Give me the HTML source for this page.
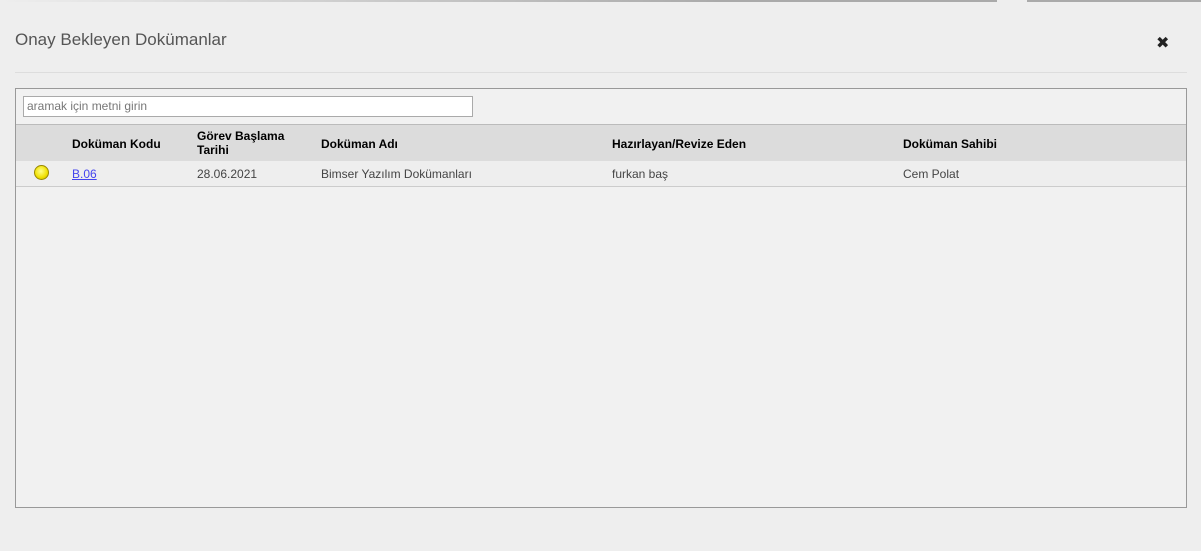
<!DOCTYPE html>
<html><head><meta charset="utf-8"><style>
body{margin:0;width:1201px;height:551px;background:#eeeeee;font-family:"Liberation Sans","DejaVu Sans",sans-serif;position:relative;overflow:hidden}
.top{position:absolute;top:0;left:0;width:1201px;height:2px;background:linear-gradient(90deg,#eee 0,#ccc 30%,#aaa 60%,#aaa 83%,#eee 83%,#eee 85.5%,#aaa 85.5%)}
.title{position:absolute;left:15px;top:30px;font-size:17px;color:#555}
.x{position:absolute;left:1156px;top:33px;font-size:16px;font-weight:bold;color:#222}
.hr{position:absolute;left:15px;top:72px;width:1172px;height:1px;background:#ddd}
.box{position:absolute;left:15px;top:88px;width:1170px;height:418px;border:1px solid #999;background:#f1f1f1}
.search{position:absolute;left:7px;top:7px;border:1px solid #aaa;background:#fff;font-size:12px;color:#777;line-height:18px;padding-left:3px;box-sizing:border-box;width:450px;height:21px}
.head{position:absolute;left:0;top:35px;width:1170px;height:36px;background:#dcdcdc;border-top:1px solid #bbb}
.row{position:absolute;left:0;top:72px;width:1170px;height:25px;border-bottom:1px solid #ccc;background:#eeeeee}
.h{position:absolute;font-size:12px;font-weight:bold;color:#000;line-height:14px}
.c{position:absolute;font-size:12px;color:#444;top:6px}
.dot{position:absolute;left:18px;top:4px;width:13px;height:13px;border-radius:50%;background:radial-gradient(circle at 45% 40%,#ffff88,#f0e000 60%,#b8a800);border:1px solid #998800}
</style></head><body>
<div class="top"></div>
<div class="title">Onay Bekleyen Dokümanlar</div>
<div class="x">✖</div>
<div class="hr"></div>
<div class="box">
<div class="search">aramak için metni girin</div>
<div class="head">
<div class="h" style="left:56px;top:12px">Doküman Kodu</div>
<div class="h" style="left:181px;top:4px">Görev Başlama<br>Tarihi</div>
<div class="h" style="left:305px;top:12px">Doküman Adı</div>
<div class="h" style="left:596px;top:12px">Hazırlayan/Revize Eden</div>
<div class="h" style="left:887px;top:12px">Doküman Sahibi</div>
</div>
<div class="row">
<div class="dot"></div>
<div class="c" style="left:56px;color:#4444ee;text-decoration:underline">B.06</div>
<div class="c" style="left:181px">28.06.2021</div>
<div class="c" style="left:305px">Bimser Yazılım Dokümanları</div>
<div class="c" style="left:596px">furkan baş</div>
<div class="c" style="left:887px">Cem Polat</div>
</div>
</div>
</body></html>
